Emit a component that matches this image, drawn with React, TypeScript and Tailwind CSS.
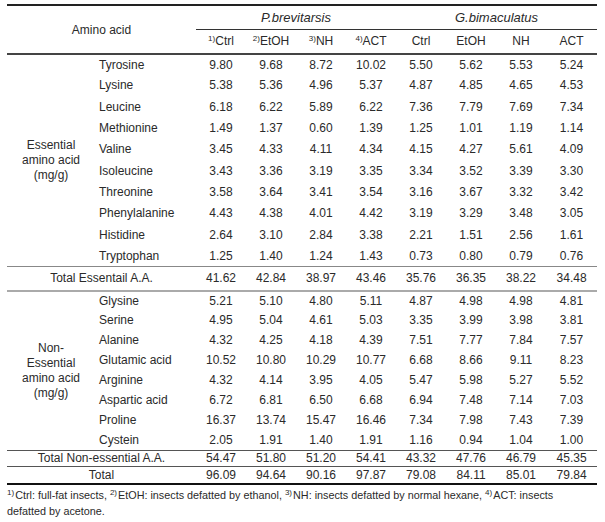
import React from "react";

type Row = [string, ...string[]];

const essential: Row[] = [
  ["Tyrosine", "9.80", "9.68", "8.72", "10.02", "5.50", "5.62", "5.53", "5.24"],
  ["Lysine", "5.38", "5.36", "4.96", "5.37", "4.87", "4.85", "4.65", "4.53"],
  ["Leucine", "6.18", "6.22", "5.89", "6.22", "7.36", "7.79", "7.69", "7.34"],
  ["Methionine", "1.49", "1.37", "0.60", "1.39", "1.25", "1.01", "1.19", "1.14"],
  ["Valine", "3.45", "4.33", "4.11", "4.34", "4.15", "4.27", "5.61", "4.09"],
  ["Isoleucine", "3.43", "3.36", "3.19", "3.35", "3.34", "3.52", "3.39", "3.30"],
  ["Threonine", "3.58", "3.64", "3.41", "3.54", "3.16", "3.67", "3.32", "3.42"],
  ["Phenylalanine", "4.43", "4.38", "4.01", "4.42", "3.19", "3.29", "3.48", "3.05"],
  ["Histidine", "2.64", "3.10", "2.84", "3.38", "2.21", "1.51", "2.56", "1.61"],
  ["Tryptophan", "1.25", "1.40", "1.24", "1.43", "0.73", "0.80", "0.79", "0.76"],
];

const nonEssential: Row[] = [
  ["Glysine", "5.21", "5.10", "4.80", "5.11", "4.87", "4.98", "4.98", "4.81"],
  ["Serine", "4.95", "5.04", "4.61", "5.03", "3.35", "3.99", "3.98", "3.81"],
  ["Alanine", "4.32", "4.25", "4.18", "4.39", "7.51", "7.77", "7.84", "7.57"],
  ["Glutamic acid", "10.52", "10.80", "10.29", "10.77", "6.68", "8.66", "9.11", "8.23"],
  ["Arginine", "4.32", "4.14", "3.95", "4.05", "5.47", "5.98", "5.27", "5.52"],
  ["Aspartic acid", "6.72", "6.81", "6.50", "6.68", "6.94", "7.48", "7.14", "7.03"],
  ["Proline", "16.37", "13.74", "15.47", "16.46", "7.34", "7.98", "7.43", "7.39"],
  ["Cystein", "2.05", "1.91", "1.40", "1.91", "1.16", "0.94", "1.04", "1.00"],
];

const totalEssential = ["41.62", "42.84", "38.97", "43.46", "35.76", "36.35", "38.22", "34.48"];
const totalNonEssential = ["54.47", "51.80", "51.20", "54.41", "43.32", "47.76", "46.79", "45.35"];
const total = ["96.09", "94.64", "90.16", "97.87", "79.08", "84.11", "85.01", "79.84"];

const Sup = ({ children }: { children: React.ReactNode }) => (
  <sup className="text-[8px]">{children}</sup>
);

// footnote marks sit at the top of the line box
const NoteMark = ({ children }: { children: React.ReactNode }) => (
  <span className="inline-block align-top text-[8px] leading-[10px] mt-[1px] mr-[1px]">{children}</span>
);

const Values = ({ values }: { values: string[] }) => (
  <>
    {values.map((v, i) => (
      <td key={i} className="p-0 text-center">
        {v}
      </td>
    ))}
  </>
);

export default function App() {
  return (
    <div className="w-[605px] h-[522px] bg-white px-[7px] pt-[4px] text-[#2a2a2a] font-['Liberation_Sans',Arial,sans-serif]">
      <table className="w-[590px] table-fixed border-collapse text-[12px] leading-[15px]">
        <colgroup>
          <col className="w-[88px]" />
          <col className="w-[101px]" />
          <col className="w-[50px]" />
          <col className="w-[50px]" />
          <col className="w-[50px]" />
          <col className="w-[50px]" />
          <col className="w-[50px]" />
          <col className="w-[50px]" />
          <col className="w-[50px]" />
          <col className="w-[51px]" />
        </colgroup>
        <thead>
          <tr className="h-[24px] border-t-2 border-[#222]">
            <th colSpan={2} rowSpan={2} className="p-0 pt-[2px] text-center font-normal border-b-2 border-[#444]">
              Amino acid
            </th>
            <th colSpan={4} className="p-0 text-center font-normal italic text-[13px] border-b border-[#333]">
              P.brevitarsis
            </th>
            <th colSpan={4} className="p-0 text-center font-normal italic text-[13px] border-b border-[#333]">
              G.bimaculatus
            </th>
          </tr>
          <tr className="h-[25px] border-b-2 border-[#444]">
            <th className="p-0 text-center font-normal">
              <Sup>1)</Sup>Ctrl
            </th>
            <th className="p-0 text-center font-normal">
              <Sup>2)</Sup>EtOH
            </th>
            <th className="p-0 text-center font-normal">
              <Sup>3)</Sup>NH
            </th>
            <th className="p-0 text-center font-normal">
              <Sup>4)</Sup>ACT
            </th>
            <th className="p-0 text-center font-normal">Ctrl</th>
            <th className="p-0 text-center font-normal">EtOH</th>
            <th className="p-0 text-center font-normal">NH</th>
            <th className="p-0 text-center font-normal">ACT</th>
          </tr>
        </thead>
        <tbody>
          {essential.map(([name, ...values], i) => (
            <tr key={name} className="h-[21.3px]">
              {i === 0 && (
                <td rowSpan={essential.length} className="p-0 text-center align-middle">
                  Essential
                  <br />
                  amino acid
                  <br />
                  (mg/g)
                </td>
              )}
              <td className="p-0 pl-[4px] text-left">{name}</td>
              <Values values={values} />
            </tr>
          ))}
          <tr className="h-[24px] border-t border-[#888] border-b-2 border-b-[#aaa]">
            <td colSpan={2} className="p-0 text-center">
              Total Essentail A.A.
            </td>
            <Values values={totalEssential} />
          </tr>
          {nonEssential.map(([name, ...values], i) => (
            <tr key={name} className="h-[20px]">
              {i === 0 && (
                <td rowSpan={nonEssential.length} className="p-0 text-center align-middle">
                  Non-
                  <br />
                  Essential
                  <br />
                  amino acid
                  <br />
                  (mg/g)
                </td>
              )}
              <td className="p-0 pl-[4px] text-left">{name}</td>
              <Values values={values} />
            </tr>
          ))}
          <tr className="h-[16px] border-t border-[#555]">
            <td colSpan={2} className="p-0 text-center">
              Total Non-essential A.A.
            </td>
            <Values values={totalNonEssential} />
          </tr>
          <tr className="h-[17px] border-t border-[#555] border-b-2 border-b-[#111]">
            <td colSpan={2} className="p-0 text-center">
              Total
            </td>
            <Values values={total} />
          </tr>
        </tbody>
      </table>
      <p className="mt-[2px] w-[566px] text-[10.8px] leading-[16px]">
        <span>
          <NoteMark>1)</NoteMark>Ctrl: full-fat insects, <NoteMark>2)</NoteMark>EtOH: insects defatted by
          ethanol, <NoteMark>3)</NoteMark>NH: insects defatted by normal hexane,{" "}
          <NoteMark>4)</NoteMark>ACT: insects
        </span>
        <br />
        <span>defatted by acetone.</span>
      </p>
    </div>
  );
}
